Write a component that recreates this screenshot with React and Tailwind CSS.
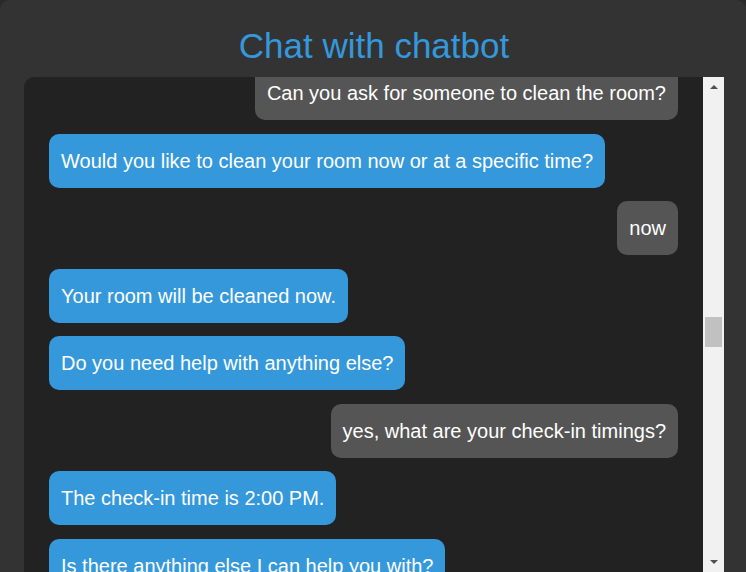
import React from "react";

const messages = [
  { from: "user", text: "Can you ask for someone to clean the room?" },
  { from: "bot", text: "Would you like to clean your room now or at a specific time?" },
  { from: "user", text: "now" },
  { from: "bot", text: "Your room will be cleaned now." },
  { from: "bot", text: "Do you need help with anything else?" },
  { from: "user", text: "yes, what are your check-in timings?" },
  { from: "bot", text: "The check-in time is 2:00 PM." },
  { from: "bot", text: "Is there anything else I can help you with?" },
];

const Bubble = ({ from, text, first }) => (
  <div className={`flex ${from === "user" ? "justify-end" : "justify-start"} ${first ? "-mt-[11px]" : ""}`}>
    <div
      className={`rounded-[10px] px-3 py-4 text-[20px] leading-[22px] text-white ${
        from === "user" ? "bg-[#555555]" : "bg-[#3498db]"
      }`}
    >
      {text}
    </div>
  </div>
);

// fake scrollbar, the page is a screenshot of a scrolled list
const Scrollbar = () => (
  <div className="flex w-[21px] shrink-0 flex-col items-center bg-[#f1f1f1] px-[2px]">
    <div className="flex h-[20px] items-center justify-center">
      <span className="h-0 w-0 border-x-[4px] border-b-[4px] border-x-transparent border-b-[#505050]" />
    </div>
    <div className="flex-1 w-full">
      <div className="mt-[220px] h-[30px] w-full bg-[#c1c1c1]" />
    </div>
    <div className="flex h-[20px] items-center justify-center">
      <span className="h-0 w-0 border-x-[4px] border-t-[4px] border-x-transparent border-t-[#505050]" />
    </div>
  </div>
);

export default function App() {
  return (
    <div className="h-[572px] w-[746px] overflow-hidden bg-[#2a2a2a] font-['Liberation_Sans',Arial,sans-serif]">
      <div className="flex h-[600px] flex-col rounded-[10px] bg-[#333333] pl-[24px] pr-[22px]">
        <h1 className="pt-[26px] pb-[11px] text-center text-[35px] leading-[40px] text-[#3498db]">
          Chat with chatbot
        </h1>
        <div className="flex h-[495px] overflow-hidden rounded-tl-[10px] bg-[#222222]">
          <div className="flex-1 overflow-hidden pl-[25px] pr-[25px]">
            <div className="flex flex-col gap-[13.5px]">
              {messages.map((m, i) => (
                <Bubble key={i} from={m.from} text={m.text} first={i === 0} />
              ))}
            </div>
          </div>
          <Scrollbar />
        </div>
      </div>
    </div>
  );
}
